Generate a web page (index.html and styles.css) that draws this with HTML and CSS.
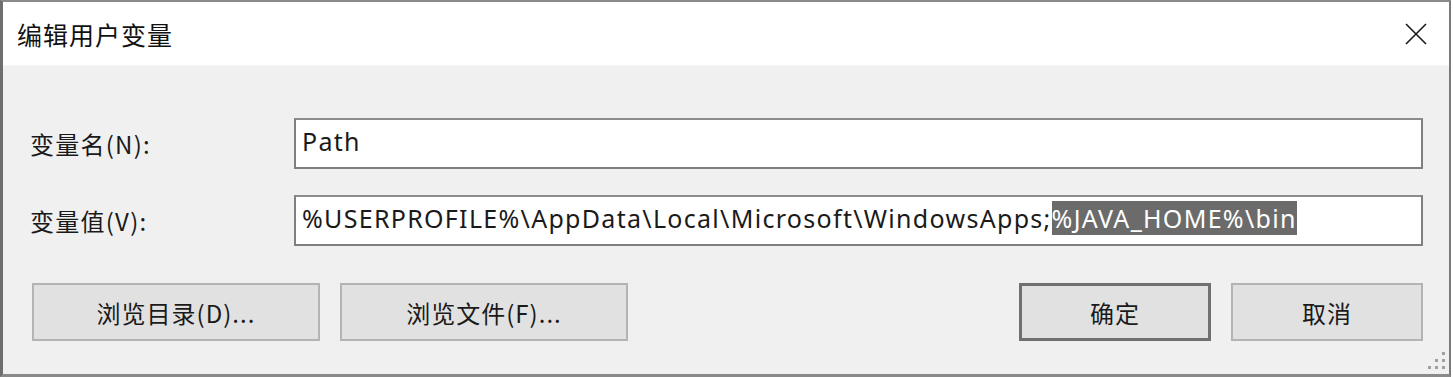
FILE: index.html
```html
<!DOCTYPE html>
<html lang="zh-CN">
<head>
<meta charset="utf-8">
<title>编辑用户变量</title>
<link rel="stylesheet" href="styles.css">
</head>
<body>
<div class="window">
  <div class="titlebar">
    <span class="title">编辑用户变量</span>
    <svg class="close" width="22" height="22" viewBox="0 0 22 22"><path d="M1 1 L21 21 M21 1 L1 21" stroke="#1a1a1a" stroke-width="1.6" fill="none"/></svg>
  </div>
  <div class="content">
    <div class="row">
      <div class="label">变量名(N):</div>
      <div class="input"><span class="text">Path</span></div>
    </div>
    <div class="row row2">
      <div class="label">变量值(V):</div>
      <div class="input"><span class="text">%USERPROFILE%\AppData\Local\Microsoft\WindowsApps;<span class="sel">%JAVA_HOME%\bin</span></span></div>
    </div>
    <div class="buttons">
      <button class="btn wide">浏览目录(D)...</button>
      <button class="btn wide">浏览文件(F)...</button>
      <div class="spacer"></div>
      <button class="btn narrow default">确定</button>
      <button class="btn narrow">取消</button>
    </div>
    <svg class="grip" width="22" height="22" viewBox="0 0 22 22">
      <g fill="#a0a0a0">
        <rect x="17" y="2" width="3" height="3"/>
        <rect x="17" y="9" width="3" height="3"/>
        <rect x="10" y="9" width="3" height="3"/>
        <rect x="17" y="16" width="3" height="3"/>
        <rect x="10" y="16" width="3" height="3"/>
        <rect x="3" y="16" width="3" height="3"/>
      </g>
    </svg>
  </div>
</div>
</body>
</html>
```

FILE: styles.css
```css
* { box-sizing: border-box; }
html, body { margin: 0; padding: 0; background: #ffffff; }
body {
  font-family: "Noto Sans", "Noto Sans CJK SC", sans-serif;
  color: #1a1a1a;
}
.window {
  width: 1451px;
  height: 377px;
  border-top: 2px solid #8a8a8a;
  border-left: 3px solid #6e6e6e;
  border-right: 2px solid #7a7a7a;
  border-bottom: 3px solid #8a8a8a;
  display: flex;
  flex-direction: column;
  background: #f0f0f0;
}
.titlebar {
  height: 64px;
  background: #ffffff;
  display: flex;
  align-items: center;
  justify-content: space-between;
  padding: 0 22px 0 14px;
  border-bottom: 1px solid #f5f5f5;
}
.title {
  font-family: "Noto Sans CJK SC", sans-serif;
  font-size: 25px;
  letter-spacing: 1px;
  color: #111;
}
.close { display: block; }
.content {
  position: relative;
  flex: 1;
  padding: 52px 26px 0 27px;
  background: #f0f0f0;
}
.row {
  display: flex;
  align-items: center;
  height: 51px;
}
.row2 { margin-top: 26px; }
.label {
  width: 264px;
  font-family: "Noto Sans CJK SC", sans-serif;
  font-size: 24px;
  letter-spacing: 1.25px;
  color: #1a1a1a;
}
.input {
  flex: 1;
  height: 51px;
  background: #ffffff;
  border: 2px solid #7f7f7f;
  border-top-color: #8c8c8c;
  padding: 4px 6px 0 6px;
  font-size: 25px;
  line-height: 34px;
  white-space: nowrap;
  overflow: hidden;
}
.text { letter-spacing: 1.3px; }
.sel {
  background: #6b6b6b;
  color: #ffffff;
}
.buttons {
  display: flex;
  gap: 20px;
  margin-top: 37px;
  padding-left: 2px;
}
.spacer { flex: 1; }
.btn {
  height: 58px;
  background: #e1e1e1;
  border: 2px solid #b4b4b4;
  font-family: "Noto Sans CJK SC", sans-serif;
  font-size: 24px;
  letter-spacing: 1px;
  color: #1a1a1a;
  padding: 0;
}
.wide { width: 288px; }
.narrow { width: 192px; }
.default { border: 3px solid #707070; }
.grip {
  position: absolute;
  right: 2px;
  bottom: 2px;
}
```
